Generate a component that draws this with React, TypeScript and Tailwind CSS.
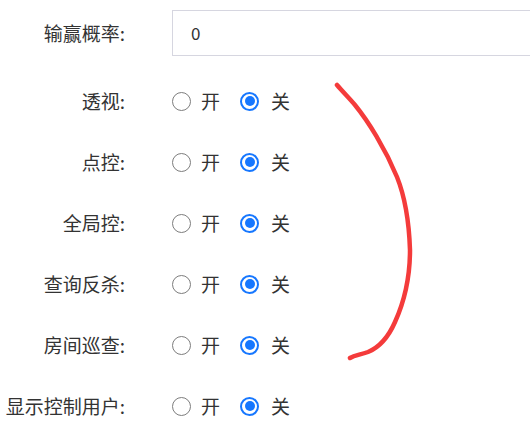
import React from "react";

const ROWS = ["透视", "点控", "全局控", "查询反杀", "房间巡查", "显示控制用户"];

function Radio({ checked }: { checked: boolean }) {
  if (checked) {
    return (
      <span className="flex h-[19px] w-[19px] items-center justify-center rounded-full border-2 border-[#1677ff]">
        <span className="h-[10px] w-[10px] rounded-full bg-[#1677ff]" />
      </span>
    );
  }
  return <span className="h-[19px] w-[19px] rounded-full border-[1.5px] border-[#7d7d7d]" />;
}

function SwitchRow({ label }: { label: string }) {
  return (
    <div className="flex h-[40px] items-center">
      <div className="w-[125px] shrink-0 text-right">{label}:</div>
      <div className="ml-[47px] flex items-center">
        <Radio checked={false} />
        <span className="ml-[10px]">开</span>
        <span className="ml-[20px] flex">
          <Radio checked />
        </span>
        <span className="ml-[12px]">关</span>
      </div>
    </div>
  );
}

export default function App() {
  return (
    <div
      className="relative h-[434px] w-[530px] overflow-hidden bg-white text-[19px] text-[#333]"
      style={{ fontFamily: '"Noto Sans CJK SC", "Noto Sans", sans-serif' }}
    >
      <div className="flex flex-col pt-[10px]">
        <div className="flex h-[46px] items-center">
          <div className="w-[125px] shrink-0 text-right">输赢概率:</div>
          <div className="ml-[47px] flex h-[46px] w-[400px] shrink-0 items-center border border-[#d6d6e0] pl-[18px] text-[17px]">
            0
          </div>
        </div>
        <div className="mt-[25px] flex flex-col gap-[21px]">
          {ROWS.map((r) => (
            <SwitchRow key={r} label={r} />
          ))}
        </div>
      </div>
      <svg className="pointer-events-none absolute left-0 top-0" width="530" height="434">
        <path
          d="M337 85 C343 92 350 99 355 105 C368 121 385 148 397 177 C405 197 409 220 410 250 C410 275 405 300 395 322 C388 338 380 347 368 352 C360 355 355 355 350 358"
          fill="none"
          stroke="#f43b3b"
          strokeWidth="4.5"
          strokeLinecap="round"
        />
      </svg>
    </div>
  );
}
